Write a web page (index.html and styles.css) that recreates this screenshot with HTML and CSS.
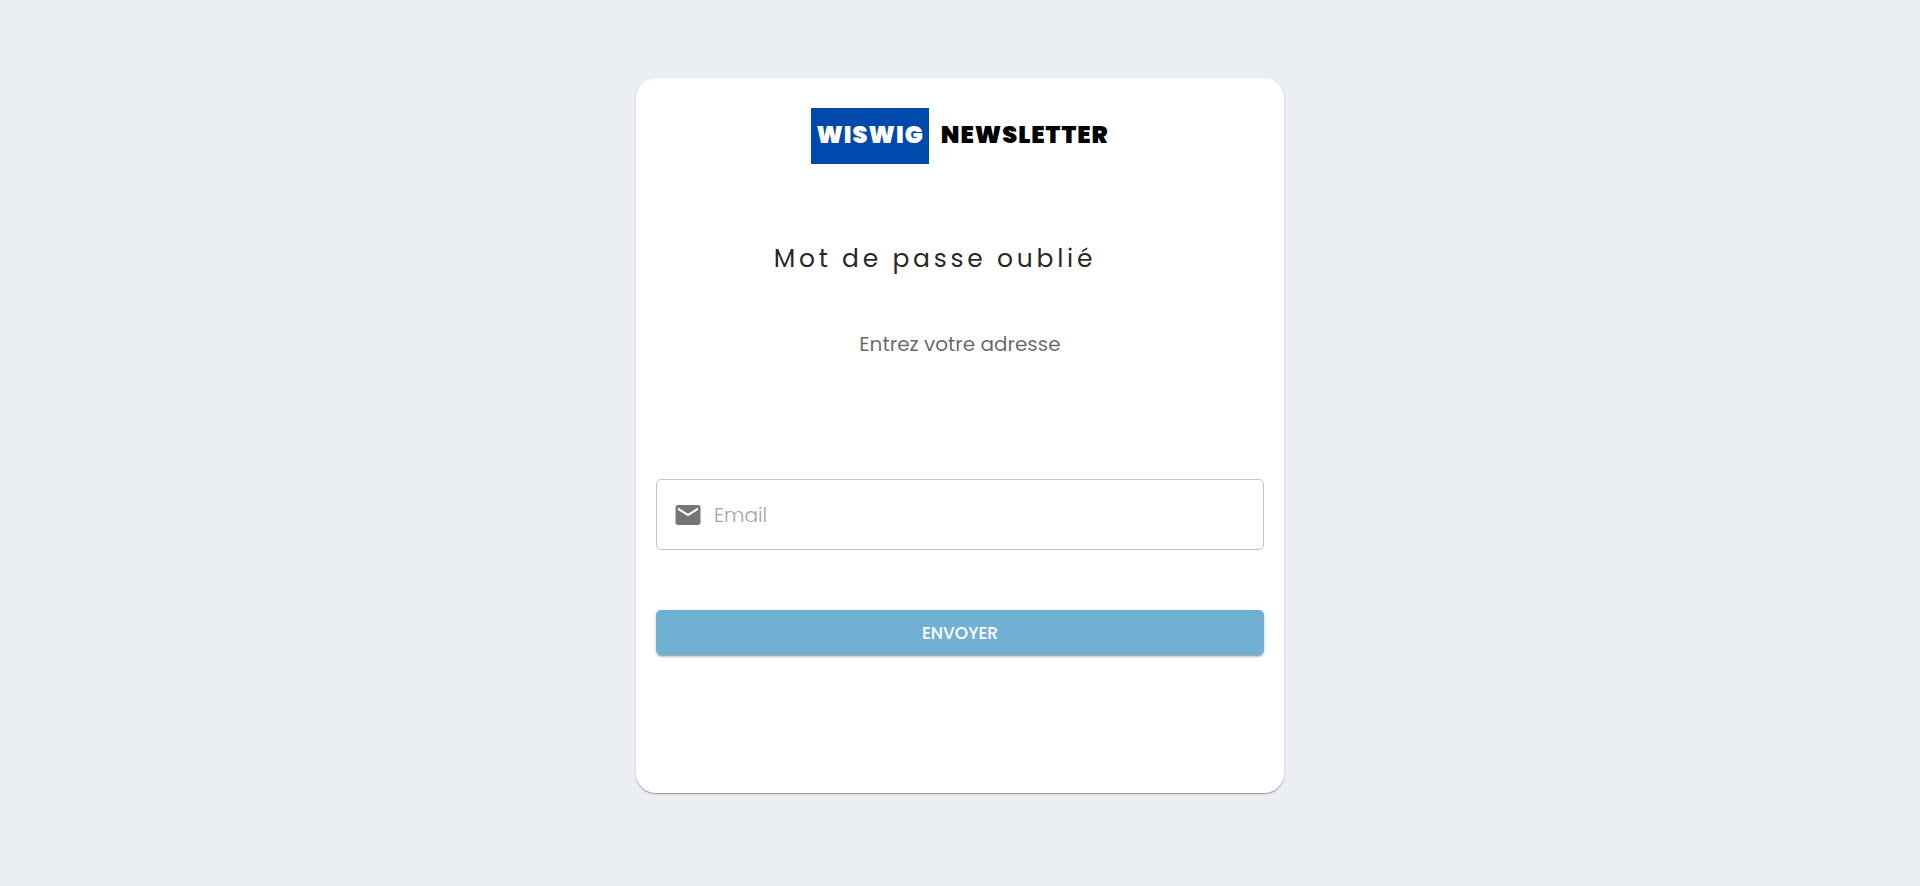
FILE: index.html
```html
<!DOCTYPE html>
<html lang="fr">
<head>
<meta charset="utf-8">
<meta name="viewport" content="width=device-width, initial-scale=1">
<title>Mot de passe oublié</title>
<link rel="stylesheet" href="styles.css">
</head>
<body>
<main class="card">
  <div class="logo">
    <span class="logo-badge">WISWIG</span>
    <span class="logo-name">NEWSLETTER</span>
  </div>
  <h1 class="title">Mot de passe oublié</h1>
  <p class="hint">Entrez votre adresse</p>
  <form class="form">
    <label class="field">
      <svg class="field-icon" viewBox="0 0 24 24" role="img" aria-label="Email"><path d="M20 4H4c-1.100 0-1.990.9-1.990 2L2 18c0 1.100.9 2 2 2h16c1.100 0 2-.9 2-2V6c0-1.100-.9-2-2-2zm0 4l-8 5-8-5V6l8 5 8-5v2z"/></svg>
      <input class="field-input" type="email" placeholder="Email">
    </label>
    <button class="submit" type="submit">ENVOYER</button>
  </form>
</main>
</body>
</html>
```
FILE: styles.css
```css
* {
  box-sizing: border-box;
}

body {
  margin: 0;
  min-height: 100vh;
  padding: 78px 16px 93px;
  background: #ebeff4;
  font-family: Poppins, Inter, sans-serif;
  color: rgba(0, 0, 0, 0.87);
}

.card {
  max-width: 648px;
  margin: 0 auto;
  padding: 30px 20px 138px;
  border-radius: 20px;
  background: #fff;
  box-shadow: 0 2px 1px -1px rgba(0, 0, 0, 0.2), 0 1px 1px rgba(0, 0, 0, 0.14), 0 1px 3px rgba(0, 0, 0, 0.12);
}

.logo {
  display: flex;
  justify-content: center;
  gap: 12px;
  font-size: 24px;
  font-weight: 900;
  line-height: 54px;
  letter-spacing: 1px;
  color: #000;
}

.logo-badge {
  height: 56px;
  padding: 0 5px;
  background: #004aad;
  color: #fff;
}

.title {
  margin: 77px 50px 0 0;
  font-size: 25px;
  font-weight: 400;
  line-height: 36px;
  letter-spacing: 0.15em;
  text-align: center;
}

.hint {
  margin: 51px 0 0;
  font-size: 20px;
  line-height: 32px;
  text-align: center;
  color: rgba(0, 0, 0, 0.6);
}

.form {
  display: flex;
  flex-direction: column;
  gap: 60px;
  margin-top: 119px;
}

.field {
  display: flex;
  align-items: center;
  gap: 11px;
  height: 71px;
  padding: 0 16px;
  border: 1px solid #c4c4c4;
  border-radius: 5px;
}

.field-icon {
  width: 30px;
  height: 30px;
  fill: #757575;
}

.field-input {
  flex: 1;
  min-width: 0;
  padding: 0;
  border: 0;
  outline: 0;
  background: none;
  font: 300 20px/32px Poppins, Inter, sans-serif;
  color: inherit;
}

.field-input::placeholder {
  color: #a4a4a4;
}

.submit {
  height: 45px;
  border: 0;
  border-radius: 5px;
  background: #70b1d3;
  box-shadow: 0 3px 1px -2px rgba(0, 0, 0, 0.2), 0 2px 2px rgba(0, 0, 0, 0.14), 0 1px 5px rgba(0, 0, 0, 0.12);
  font: 500 17px/28px Poppins, Inter, sans-serif;
  color: #fff;
  cursor: pointer;
}
```
